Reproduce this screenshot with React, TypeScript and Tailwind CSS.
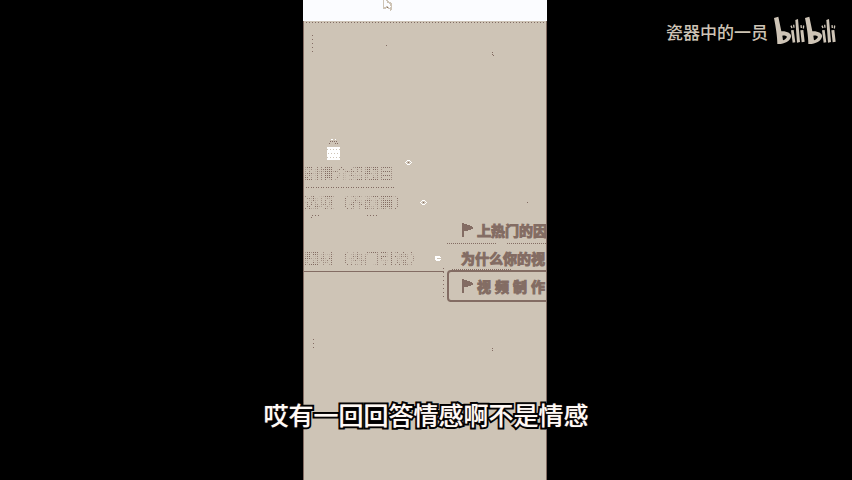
const cjk = "font-['Noto_Sans_CJK_SC',sans-serif]";

const dots =
  'bg-[conic-gradient(#836c63_25%,transparent_0)] bg-[size:2px_2px]';

function Flag() {
  return (
    <svg width="12" height="14" viewBox="0 0 12 14" shapeRendering="crispEdges" aria-hidden="true" className="shrink-0">
      <path d="M0 0h2v1h3v1h3v1h2v1h1v2h-2v1h-3v1h-4v6h-2z" fill="#836c63" />
    </svg>
  );
}

function FaintTopic({ text, place }: { text: string; place: string }) {
  return (
    <span
      className={`absolute whitespace-nowrap bg-clip-text text-[15px] leading-5 font-medium text-transparent ${dots} ${place}`}
    >
      {text}
    </span>
  );
}

function Marker({ place, kind }: { place: string; kind: 'dot' | 'minus' }) {
  return (
    <svg width="7" height="5" viewBox="0 0 7 5" shapeRendering="crispEdges" aria-hidden="true" className={`absolute ${place}`}>
      {kind === 'dot' ? (
        <>
          <path d="M2 0h3v1h-3zM1 1h1v1h-1zM5 1h1v1h-1zM0 2h1v1h-1zM6 2h1v1h-1zM1 3h1v1h-1zM5 3h1v1h-1zM2 4h3v1h-3z" fill="#fff" />
          <path d="M3 2h1v1h-1z" fill="#836c63" />
        </>
      ) : (
        <path d="M0 0h5v1h1v1h-4v1h4v1h-1v1h-4v-1h-1z" fill="#fff" />
      )}
    </svg>
  );
}

function MindMap() {
  const topic =
    'flex items-center whitespace-nowrap text-sm leading-5 font-bold text-[#836c63] [-webkit-text-stroke:1px_#836c63]';
  return (
    <main className="relative min-h-0 flex-1 overflow-hidden border-x border-[#836c63] bg-[#cec4b6]">
      <div className="absolute inset-x-0 top-px h-px bg-[repeating-linear-gradient(90deg,transparent_0_2px,#836c63_2px_3px)]" />

      <svg width="244" height="460" viewBox="303 21 244 460" shapeRendering="crispEdges" aria-hidden="true" className="absolute -left-px top-0">
        <g fill="none" stroke="#836c63">
          <path d="M312.500 35v19M313.500 339v10" strokeDasharray="1 3" />
          <path d="M386 45.500h1M492 52.500h1M492 54.500h1M493 55.500h1M527 202.500h1M492 348.500h1M492 350.500h1" />
          <path d="M306 187.500h89" strokeDasharray="1 1 1 2" />
          <path d="M312 215.500h7M311 217.500h3M367 215.500h11" strokeDasharray="1 2" />
          <path d="M304 271.500h140" />
          <path d="M447 243.500h50M507 243.500h39" strokeDasharray="1 1" />
          <path d="M443.500 268v30" strokeDasharray="1 3" />
          <path d="M450 301.500h97M452 269.500h60" strokeDasharray="1 1" />
        </g>
        <path d="M327 147h13v13h-13z" fill="#fff" />
        <path d="M327 149.500h13M328 153.500h12M327 157.500h13" stroke="#cec4b6" strokeDasharray="1 2" />
        <path d="M330 141.500h7M329 143.500h2M335 143.500h3" stroke="#836c63" strokeDasharray="1 1" />
        <path d="M331 139h2v1h-2zM335 139h1v1h-1z" fill="#fff" />
      </svg>

      <FaintTopic text="剧情介绍题目" place="left-0 top-[142px]" />
      <Marker kind="dot" place="left-[101px] top-[139px]" />
      <FaintTopic text="选项（养颜篇）" place="left-0 top-[171px]" />
      <Marker kind="dot" place="left-[116px] top-[179px]" />
      <FaintTopic text="题材（热门引流）" place="left-0 top-[227px]" />
      <Marker kind="minus" place="left-[131px] top-[235px]" />

      <div className={`absolute left-[158px] top-[199px] gap-[3px] ${topic}`}>
        <Flag />
        上热门的因
      </div>
      <div className={`absolute left-[157px] top-[227px] ${topic}`}>为什么你的视</div>
      <div className={`absolute left-[143px] top-[249px] w-32 gap-[3px] rounded-sm border-2 border-[#836c63] py-1 pl-[13px] ${topic}`}>
        <Flag />
        <span className="flex gap-1">
          <span>视</span>
          <span>频</span>
          <span>制</span>
          <span>作</span>
        </span>
      </div>
    </main>
  );
}

function Logo() {
  return (
    <svg width="72" height="38" viewBox="0 0 216 114" role="img" aria-label="bilibili" className="shrink-0">
      {[0, 93].map((x) => (
        <g key={x} transform={`translate(${x} 0)`} fill="#cec4b6">
          <path
            fillRule="evenodd"
            d="M12 24L25 20L34 64C51 63 65 71 63 80C60 93 43 103 22 102C22 80 17 49 12 24ZM37 77L39 91C45 89 50 84 51 80C48 77 42 76 37 77Z"
          />
          <path d="M63 61L71 60L76 97L68 98ZM76 30L84 27L90 96L81 98ZM91 61L100 60L104 95L95 97Z" />
          <path d="M61 48l4-2 3 8-4 1ZM69 44l4 0 1 9-4 0ZM91 46l4-1 1 9-4 0ZM99 46l4 1-1 9-4-1Z" />
        </g>
      ))}
    </svg>
  );
}

export default function App() {
  return (
    <div className={`relative flex h-screen justify-center overflow-hidden bg-black pr-0.5 ${cjk}`}>
      <div className="flex aspect-[61/120] h-full flex-col">
        <header className="relative h-[21px] shrink-0 bg-[#fbfcff]">
          <svg width="9" height="11" viewBox="0 0 9 11" shapeRendering="crispEdges" aria-hidden="true" className="absolute left-[80px] top-0">
            <path d="M0 0h1v7h2v-1h2v1h1v1h1v-1h1v-1h-1v-2h-1v-1h-2v-2h-1v-1h2v1h1v1h2v1h1v2h1v2h-1v3h-1v1h-1v-2h-2v-1h-2v1h-3z" fill="#cec4b6" />
            <path d="M4 7h1v1h-1z" fill="#836c63" />
          </svg>
        </header>
        <MindMap />
      </div>

      <div className="absolute right-[10px] top-[10px] flex items-center gap-0.5">
        <span className="whitespace-nowrap pt-1.5 text-[17px] leading-7 font-medium text-[#cec4b6]">瓷器中的一员</span>
        <Logo />
      </div>

      <p className="absolute inset-x-0 bottom-12 text-center text-[25px] leading-9 font-medium text-[#fffaf6] [-webkit-text-stroke:4px_#000] [paint-order:stroke_fill] [text-shadow:0_0_1px_#836c63]">
        哎有一回回答情感啊不是情感
      </p>
    </div>
  );
}
